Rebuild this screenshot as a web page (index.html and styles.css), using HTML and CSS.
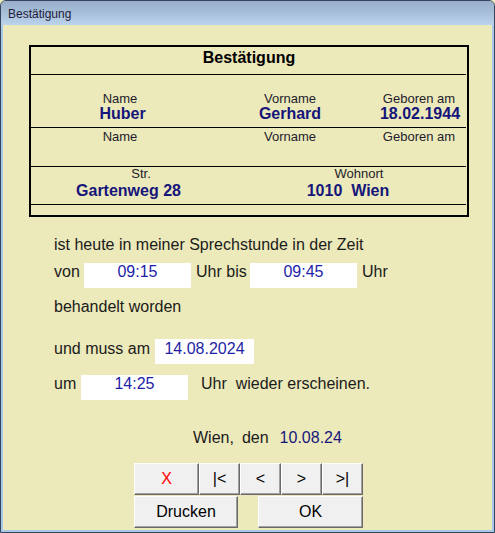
FILE: index.html
```html
<!DOCTYPE html>
<html lang="de">
<head>
<meta charset="utf-8">
<title>Bestätigung</title>
<link rel="stylesheet" href="styles.css">
</head>
<body>
<div class="window">
  <div class="titlebar">Bestätigung</div>
  <div class="content">
    <div class="card">
      <div class="card-title">Bestätigung</div>
      <div class="rule"></div>
      <div class="row row-patient">
        <div class="cell"><div class="lbl">Name</div><div class="val val-name">Huber</div></div>
        <div class="cell"><div class="lbl">Vorname</div><div class="val">Gerhard</div></div>
        <div class="cell"><div class="lbl">Geboren am</div><div class="val val-born">18.02.1944</div></div>
      </div>
      <div class="rule"></div>
      <div class="row row-blank">
        <div class="cell"><div class="lbl">Name</div></div>
        <div class="cell"><div class="lbl">Vorname</div></div>
        <div class="cell"><div class="lbl">Geboren am</div></div>
      </div>
      <div class="rule"></div>
      <div class="row row-addr">
        <div class="cell"><div class="lbl">Str.</div><div class="val val-street">Gartenweg 28</div></div>
        <div class="cell"><div class="lbl">Wohnort</div><div class="val val-city">1010&nbsp; Wien</div></div>
      </div>
      <div class="rule"></div>
      <div class="row row-foot"></div>
    </div>

    <div class="letter">
      <div class="line l-first">ist heute in meiner Sprechstunde in der Zeit</div>
      <div class="frow r-von">
        <span class="lead w-von">von</span>
        <span class="field w-time">09:15</span>
        <span class="mid">Uhr bis</span>
        <span class="field w-time">09:45</span>
        <span class="tail t-uhr">Uhr</span>
      </div>
      <div class="line l-treated">behandelt worden</div>
      <div class="frow r-und">
        <span class="lead w-und">und muss am</span>
        <span class="field w-date">14.08.2024</span>
      </div>
      <div class="frow r-um">
        <span class="lead w-um">um</span>
        <span class="field w-time">14:25</span>
        <span class="tail t-again">Uhr&nbsp; wieder erscheinen.</span>
      </div>
    </div>

    <div class="place"><span>Wien,</span><span class="den">den</span><span class="date">10.08.24</span></div>

    <div class="buttons">
      <div class="btn-row">
        <button class="btn btn-x">X</button>
        <button class="btn btn-nav">|&lt;</button>
        <button class="btn btn-nav">&lt;</button>
        <button class="btn btn-nav">&gt;</button>
        <button class="btn btn-nav">&gt;|</button>
      </div>
      <div class="btn-row">
        <button class="btn btn-print">Drucken</button>
        <button class="btn btn-ok">OK</button>
      </div>
    </div>
  </div>
</div>
</body>
</html>
```

FILE: styles.css
```css
html, body {
  margin: 0;
  padding: 0;
  background: #ece9ba;
}

body {
  font-family: "Liberation Sans", Arial, sans-serif;
}

.window {
  width: 495px;
  height: 533px;
  box-sizing: border-box;
  border: 1px solid #34445a;
  border-radius: 6px 6px 0 0;
  background: #a8c8ea;
  display: flex;
  flex-direction: column;
  overflow: hidden;
}

.titlebar {
  flex: none;
  height: 24px;
  box-sizing: border-box;
  padding: 3px 0 0 7px;
  line-height: 21px;
  font-size: 12px;
  color: #1e1c38;
  background: linear-gradient(#97adc9, #bad2eb);
}

.content {
  flex: 1;
  margin: 0 2px 2px;
  background: #ece9ba;
}

/* Card */
.card {
  margin: 20px 0 0 26px;
  width: 440px;
  height: 172px;
  box-sizing: border-box;
  border: 2px solid #000;
  display: flex;
  flex-direction: column;
}

.rule {
  flex: none;
  height: 1px;
  margin-right: 1px;
  background: #000;
}

.card-title {
  height: 27px;
  box-sizing: border-box;
  padding-top: 2px;
  text-align: center;
  font-size: 16px;
  line-height: 18px;
  font-weight: bold;
  color: #000;
}

.row {
  display: grid;
  box-sizing: border-box;
}

.row-patient {
  height: 52px;
  padding-top: 16px;
  grid-template-columns: 178px 162px 1fr;
}

.row-blank {
  height: 38px;
  padding-top: 1px;
  grid-template-columns: 178px 162px 1fr;
}

.row-addr {
  height: 37px;
  grid-template-columns: 220px 1fr;
}

.row-foot {
  height: 10px;
}

.lbl {
  font-size: 13px;
  line-height: 15px;
  color: #231c2c;
  text-align: center;
}

.val {
  font-size: 16px;
  line-height: 16px;
  font-weight: bold;
  color: #15157a;
  text-align: center;
}

.val-name { padding-left: 5px; }
.val-born { padding-left: 2px; }

.row-addr .lbl { line-height: 14px; }
.row-addr .val { margin-top: 2px; }
.val-street { padding-right: 25px; }
.val-city { padding-right: 22px; }

/* Letter text */
.letter {
  margin-top: 19px;
  padding-left: 51px;
  font-size: 16px;
  color: #1b1b1b;
}

.line {
  height: 18px;
  line-height: 18px;
  white-space: nowrap;
}

.frow {
  display: flex;
  align-items: flex-start;
  height: 25px;
  line-height: 18px;
  white-space: nowrap;
}

.r-von { margin-top: 9px; }
.l-treated { margin-top: 10px; }
.r-und { margin-top: 23px; }
.r-und > span { padding-top: 1px; }
.r-um { margin-top: 11px; }

.field {
  flex: none;
  height: 25px;
  box-sizing: border-box;
  background: #fff;
  color: #1e1ea6;
  text-align: center;
}

.w-time { width: 107px; }
.w-date { width: 99px; }

.lead { flex: none; }
.w-von { width: 30px; }
.w-und { width: 101px; }
.w-um { width: 27px; }

.mid {
  flex: none;
  width: 54px;
  margin-left: 5px;
}

.t-uhr { margin-left: 5px; }
.t-again { margin-left: 13px; }

/* Place and date */
.place {
  margin-top: 29px;
  padding-left: 190px;
  height: 18px;
  line-height: 18px;
  font-size: 16px;
  color: #1b1b1b;
  display: flex;
}

.den { margin-left: 8px; }

.date {
  margin-left: 11px;
  color: #17177e;
}

/* Buttons */
.buttons {
  margin: 16px 0 0 131px;
}

.btn-row {
  display: flex;
  height: 32px;
}

.btn-row + .btn-row {
  margin-top: 1px;
}

.btn {
  flex: none;
  height: 32px;
  box-sizing: border-box;
  margin: 0;
  padding: 0;
  background: #f0f0f0;
  border: 1px solid;
  border-color: #ffffff #696969 #696969 #ffffff;
  border-radius: 0;
  box-shadow: inset -1px -1px 0 #a0a0a0;
  font-family: "Liberation Sans", Arial, sans-serif;
  font-size: 16px;
  color: #000;
  display: flex;
  align-items: center;
  justify-content: center;
}

.btn-x {
  width: 65px;
  color: #ff0000;
}

.btn-nav { width: 41px; }

.btn-print { width: 104px; }

.btn-ok {
  width: 105px;
  margin-left: 20px;
}
```
